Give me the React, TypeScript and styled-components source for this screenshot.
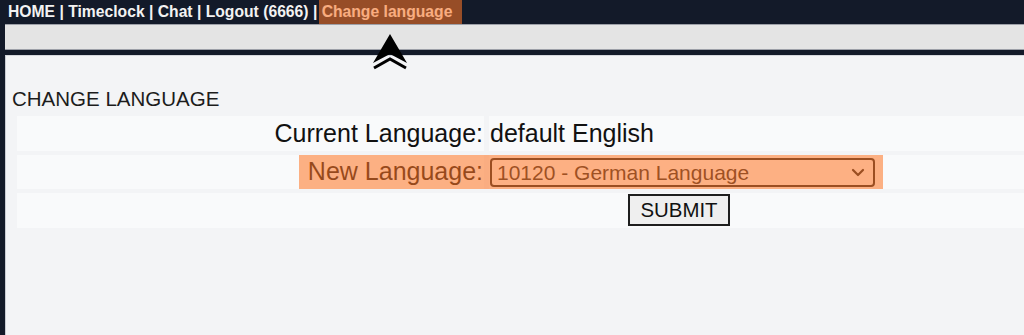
import React from "react";
import styled, { createGlobalStyle } from "styled-components";

const Global = createGlobalStyle`
  html, body { margin: 0; padding: 0; background: #131a29; overflow: hidden; }
  body { font-family: "Liberation Sans", Arial, sans-serif; width: 1024px; height: 335px; }
`;

const Page = styled.div`
  position: relative;
  height: 335px;
  display: flex;
  flex-direction: column;
  background: #131a29;
`;

const NavBar = styled.nav`
  height: 24px;
  display: flex;
  align-items: center;
  padding-left: 8px;
  color: #f2f2f2;
  font-size: 15.7px;
  font-weight: bold;
  white-space: pre;
`;

const NavItem = styled.span<{ $active?: boolean }>`
  position: relative;
  display: inline-flex;
  align-items: center;
  height: 24px;
  margin-left: ${(p) => (p.$active ? "-3px" : "0")};
  padding: ${(p) => (p.$active ? "0 10px 0 3px" : "0")};
`;

const Marker = styled.span`
  position: absolute;
  inset: 0;
  background: rgba(255, 118, 38, 0.56);
  pointer-events: none;
`;

const SubBar = styled.div`
  margin-left: 5px;
  height: 24px;
  background: #e4e4e4;
  border-top: 1px solid #9da0a8;
  border-bottom: 1px solid #9da0a8;
`;

const Content = styled.main`
  margin-left: 5px;
  margin-top: 5px;
  flex: 1;
  background: #f3f4f6;
  border-top: 1px solid #d5d7dc;
  border-left: 1px solid #c9ccd3;
  overflow: hidden;
  padding: 33px 0 0 6px;
`;

const Heading = styled.h2`
  margin: 0 0 7px 0;
  font-size: 20.5px;
  font-weight: normal;
  color: #1c1c1c;
  line-height: 20px;
`;

const Table = styled.div`
  position: relative;
  margin-left: 5px;
  width: 1324px;
  display: grid;
  grid-template-columns: 467px 1fr;
  grid-auto-rows: 34.5px;
  column-gap: 5px;
  row-gap: 4px;
`;

const Cell = styled.div<{ $align?: "left" | "right" | "center"; $span?: boolean }>`
  background: #f9fafb;
  display: flex;
  align-items: center;
  justify-content: ${(p) =>
    p.$align === "right" ? "flex-end" : p.$align === "center" ? "center" : "flex-start"};
  grid-column: ${(p) => (p.$span ? "1 / 3" : "auto")};
  font-size: 25px;
  color: #111;
  padding: 0 1px;
`;

const SelectWrap = styled.div`
  position: relative;
  width: 385px;
  height: 29px;
`;

const Select = styled.select`
  appearance: none;
  -webkit-appearance: none;
  width: 100%;
  height: 100%;
  border: 2px solid #1c1c1c;
  border-radius: 4px;
  background: #fafafa;
  font-family: "Liberation Sans", Arial, sans-serif;
  font-size: 21px;
  color: #222;
  padding: 0 0 0 5px;
`;

const Chevron = styled.svg`
  position: absolute;
  right: 10px;
  top: 11px;
  pointer-events: none;
`;

const Button = styled.button`
  width: 102px;
  height: 32px;
  border: 2px solid #1e1e1e;
  border-radius: 0;
  background: #efefef;
  font-family: "Liberation Sans", Arial, sans-serif;
  font-size: 20.4px;
  color: #111;
  padding: 0;
`;

const RowHighlight = styled.div`
  position: absolute;
  left: 282px;
  top: 38.5px;
  width: 584px;
  height: 34.5px;
  background: rgba(255, 118, 38, 0.56);
  pointer-events: none;
`;

const Pointer = styled.svg`
  position: absolute;
  left: 372px;
  top: 33px;
  pointer-events: none;
`;

export default function App() {
  return (
    <>
      <Global />
      <Page>
        <NavBar>
          <NavItem>HOME | Timeclock | Chat | Logout (6666) | </NavItem>
          <NavItem $active>
            {"Change language"}
            <Marker />
          </NavItem>
        </NavBar>
        <SubBar />
        <Content>
          <Heading>CHANGE LANGUAGE</Heading>
          <Table>
            <Cell $align="right">Current Language:</Cell>
            <Cell>default English</Cell>
            <Cell $align="right">New Language:</Cell>
            <Cell>
              <SelectWrap>
                <Select defaultValue="10120">
                  <option value="10120">10120 - German Language</option>
                </Select>
                <Chevron width="14" height="9" viewBox="0 0 14 9">
                  <polyline points="2,2 7,7 12,2" fill="none" stroke="#1c1c1c" strokeWidth="2.2" strokeLinecap="round" strokeLinejoin="round" />
                </Chevron>
              </SelectWrap>
            </Cell>
            <Cell $span $align="center">
              <Button type="button">SUBMIT</Button>
            </Cell>
            <RowHighlight />
          </Table>
        </Content>
        <Pointer width="38" height="38" viewBox="0 0 38 38">
          <polygon points="18,1 1,30 18,21 35,30" fill="#000" />
          <polyline points="2,35 18,26 34,35" fill="none" stroke="#000" strokeWidth="3" strokeLinejoin="miter" />
        </Pointer>
      </Page>
    </>
  );
}
